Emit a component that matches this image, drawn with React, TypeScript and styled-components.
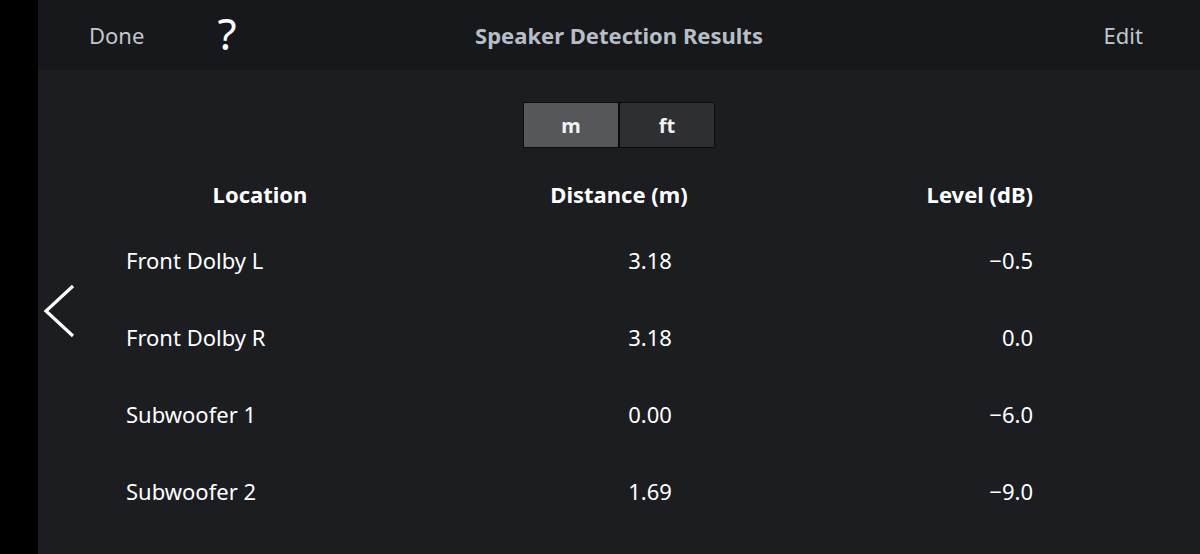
import React, { useState } from "react";
import styled, { createGlobalStyle } from "styled-components";

const GlobalStyle = createGlobalStyle`
  html, body {
    margin: 0;
    padding: 0;
    background: #000;
  }
  body {
    font-family: "Noto Sans", "Open Sans", sans-serif;
    -webkit-font-smoothing: antialiased;
  }
`;

const Screen = styled.div`
  display: flex;
  width: 1200px;
  height: 554px;
  overflow: hidden;
  background: #000;
`;

const Bezel = styled.div`
  width: 38px;
  flex-shrink: 0;
  background: #000;
`;

const Main = styled.div`
  position: relative;
  flex: 1;
  display: flex;
  flex-direction: column;
  background: #1b1d21;
`;

const Header = styled.header`
  height: 70px;
  display: grid;
  grid-template-columns: 1fr auto 1fr;
  align-items: center;
  background: #16181c;
`;

const HeaderLeft = styled.div`
  display: flex;
  align-items: center;
  padding-left: 51px;
  gap: 73px;
`;

const HeaderRight = styled.div`
  display: flex;
  justify-content: flex-end;
  padding-right: 57px;
`;

const HeaderButton = styled.button`
  background: none;
  border: none;
  padding: 0;
  font-family: inherit;
  font-size: 22px;
  color: #c2c7ce;
  cursor: pointer;
`;

const HelpButton = styled.button`
  background: none;
  border: none;
  padding: 0;
  margin-top: -4px;
  font-family: inherit;
  font-size: 44px;
  font-weight: 400;
  line-height: 1;
  color: #fff;
  cursor: pointer;
`;

const Title = styled.h1`
  margin: 0;
  font-size: 22px;
  font-weight: 700;
  color: #b8bec6;
`;

const Body = styled.div`
  flex: 1;
  display: flex;
  flex-direction: column;
  align-items: center;
  padding-top: 32px;
`;

const Segmented = styled.div`
  display: flex;
  gap: 2px;
  padding: 1px;
  background: #0c0c0d;
  border-radius: 2px;
`;

const Segment = styled.button<{ $active: boolean }>`
  width: 94px;
  height: 44px;
  border: none;
  border-radius: 1px;
  font-family: inherit;
  font-size: 20px;
  font-weight: 700;
  color: #f2f2f2;
  background: ${(p) => (p.$active ? "#56575b" : "#2e2f33")};
  cursor: pointer;
`;

const Table = styled.div`
  align-self: stretch;
  margin-top: 21px;
  padding-left: 88px;
  padding-right: 167px;
`;

const HeadRow = styled.div`
  display: grid;
  grid-template-columns: 268px 450px 1fr;
  height: 50px;
  align-items: center;
  margin-bottom: 2px;
  font-size: 22px;
  font-weight: 700;
  color: #fff;
`;

const Row = styled.div`
  display: grid;
  grid-template-columns: 268px 450px 1fr;
  height: 77px;
  align-items: center;
  font-size: 22px;
  color: #fff;
`;

const Cell = styled.div<{ $align: "left" | "center" | "right"; $shift?: number }>`
  text-align: ${(p) => p.$align};
  padding-left: ${(p) => (p.$shift ? `${p.$shift}px` : "0")};
`;

const BackButton = styled.button`
  position: absolute;
  left: 4px;
  top: 283px;
  width: 40px;
  height: 56px;
  padding: 0;
  background: none;
  border: none;
  cursor: pointer;
`;

const rows = [
  { name: "Front Dolby L", distance: "3.18", level: "−0.5" },
  { name: "Front Dolby R", distance: "3.18", level: "0.0" },
  { name: "Subwoofer 1", distance: "0.00", level: "−6.0" },
  { name: "Subwoofer 2", distance: "1.69", level: "−9.0" },
];

const App: React.FC = () => {
  const [unit, setUnit] = useState<"m" | "ft">("m");

  return (
    <Screen>
      <GlobalStyle />
      <Bezel />
      <Main>
        <Header>
          <HeaderLeft>
            <HeaderButton>Done</HeaderButton>
            <HelpButton>?</HelpButton>
          </HeaderLeft>
          <Title>Speaker Detection Results</Title>
          <HeaderRight>
            <HeaderButton>Edit</HeaderButton>
          </HeaderRight>
        </Header>
        <Body>
          <Segmented>
            <Segment $active={unit === "m"} onClick={() => setUnit("m")}>
              m
            </Segment>
            <Segment $active={unit === "ft"} onClick={() => setUnit("ft")}>
              ft
            </Segment>
          </Segmented>
          <Table>
            <HeadRow>
              <Cell $align="center">Location</Cell>
              <Cell $align="center">Distance ({unit})</Cell>
              <Cell $align="right">Level (dB)</Cell>
            </HeadRow>
            {rows.map((r) => (
              <Row key={r.name}>
                <Cell $align="left">{r.name}</Cell>
                <Cell $align="center" $shift={62}>
                  {r.distance}
                </Cell>
                <Cell $align="right">{r.level}</Cell>
              </Row>
            ))}
          </Table>
        </Body>
        <BackButton aria-label="Back">
          <svg width="40" height="56" viewBox="0 0 40 56">
            <polyline
              points="31,3 4,28 31,53"
              fill="none"
              stroke="#fff"
              strokeWidth="3.2"
            />
          </svg>
        </BackButton>
      </Main>
    </Screen>
  );
};

export default App;
